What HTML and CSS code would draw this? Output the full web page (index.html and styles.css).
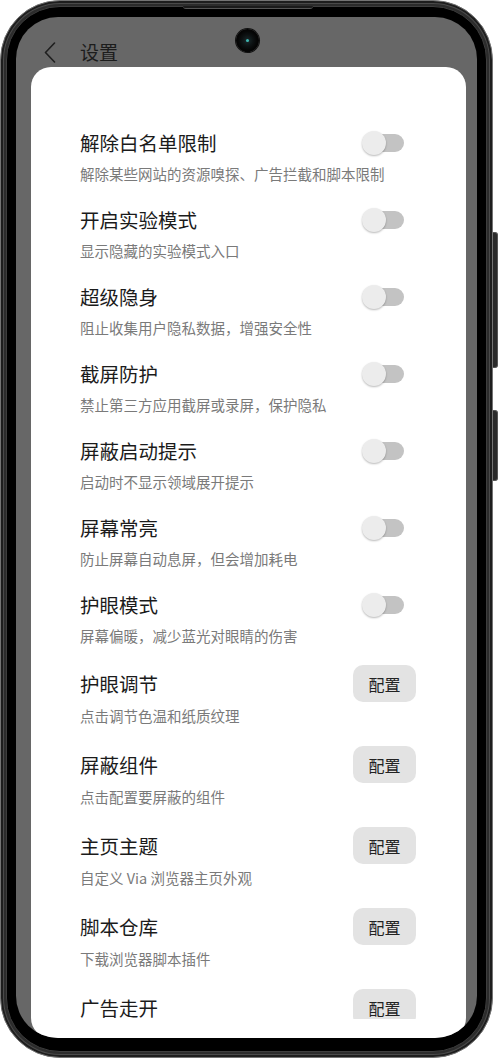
FILE: index.html
```html
<!DOCTYPE html>
<html lang="zh-CN">
<head>
<meta charset="utf-8">
<title>设置</title>
<link rel="stylesheet" href="styles.css">
</head>
<body>
<div class="phone">
  <div class="speaker"></div>
  <div class="side-btn side-vol"></div>
  <div class="side-btn side-power"></div>
  <div class="bezel">
    <div class="screen">
      <div class="camera"><span class="lens"></span></div>
      <header class="topbar">
        <svg class="back" viewBox="0 0 12 21" width="12" height="21"><path d="M10.5 1 L1.5 10.5 L10.5 20"/></svg>
        <h1 class="title">设置</h1>
      </header>
      <main class="card">
        <div class="list">
          <div class="item item-toggle">
            <div class="row"><span class="name">解除白名单限制</span><span class="switch"></span></div>
            <div class="sub">解除某些网站的资源嗅探、广告拦截和脚本限制</div>
          </div>
          <div class="item item-toggle">
            <div class="row"><span class="name">开启实验模式</span><span class="switch"></span></div>
            <div class="sub">显示隐藏的实验模式入口</div>
          </div>
          <div class="item item-toggle">
            <div class="row"><span class="name">超级隐身</span><span class="switch"></span></div>
            <div class="sub">阻止收集用户隐私数据，增强安全性</div>
          </div>
          <div class="item item-toggle">
            <div class="row"><span class="name">截屏防护</span><span class="switch"></span></div>
            <div class="sub">禁止第三方应用截屏或录屏，保护隐私</div>
          </div>
          <div class="item item-toggle">
            <div class="row"><span class="name">屏蔽启动提示</span><span class="switch"></span></div>
            <div class="sub">启动时不显示领域展开提示</div>
          </div>
          <div class="item item-toggle">
            <div class="row"><span class="name">屏幕常亮</span><span class="switch"></span></div>
            <div class="sub">防止屏幕自动息屏，但会增加耗电</div>
          </div>
          <div class="item item-toggle">
            <div class="row"><span class="name">护眼模式</span><span class="switch"></span></div>
            <div class="sub">屏幕偏暖，减少蓝光对眼睛的伤害</div>
          </div>
          <div class="item item-config">
            <div class="row"><span class="name">护眼调节</span><span class="cfg">配置</span></div>
            <div class="sub">点击调节色温和纸质纹理</div>
          </div>
          <div class="item item-config">
            <div class="row"><span class="name">屏蔽组件</span><span class="cfg">配置</span></div>
            <div class="sub">点击配置要屏蔽的组件</div>
          </div>
          <div class="item item-config">
            <div class="row"><span class="name">主页主题</span><span class="cfg">配置</span></div>
            <div class="sub">自定义 Via 浏览器主页外观</div>
          </div>
          <div class="item item-config">
            <div class="row"><span class="name">脚本仓库</span><span class="cfg">配置</span></div>
            <div class="sub">下载浏览器脚本插件</div>
          </div>
          <div class="item item-config">
            <div class="row"><span class="name">广告走开</span><span class="cfg">配置</span></div>
          </div>
        </div>
      </main>
    </div>
  </div>
</div>
</body>
</html>
```

FILE: styles.css
```css
* { box-sizing: border-box; }

html, body {
  margin: 0;
  padding: 0;
  background: #ffffff;
}

body {
  font-family: "Noto Sans CJK SC", "Noto Sans", sans-serif;
  width: 500px;
  height: 1061px;
  overflow: hidden;
}

.phone {
  position: relative;
  width: 493px;
  height: 1058px;
  border: 1px solid #747474;
  border-radius: 60px;
  background: #2c2c2c;
  padding: 5px;
  box-shadow: inset 0 0 0 2px #1e1e1e, inset 0 0 0 3px #4a4a4a;
}

.speaker {
  position: absolute;
  left: 182px;
  top: 5px;
  width: 130px;
  height: 3px;
  background: #1b1b1b;
  border-bottom: 1px solid #555;
  border-radius: 0 0 4px 4px;
}

.side-btn {
  position: absolute;
  right: -6px;
  width: 5px;
  background: #2a2a2a;
  border: 1px solid #555;
  border-left: none;
  border-radius: 0 3px 3px 0;
}

.side-vol { top: 231px; height: 136px; }
.side-power { top: 409px; height: 71px; }

.bezel {
  height: 100%;
  background: #000;
  border: 1px solid #3e3e3e;
  border-radius: 54px;
  padding: 10px 9px 13px 9px;
}

.screen {
  position: relative;
  height: 100%;
  background: #676767;
  border-radius: 42px;
  overflow: hidden;
  display: flex;
  flex-direction: column;
}

.camera {
  position: absolute;
  left: 220px;
  top: 12px;
  width: 23px;
  height: 23px;
  border-radius: 50%;
  background: radial-gradient(circle at 50% 50%, #1a2a2c 0, #0d1112 35%, #050505 60%);
  box-shadow: 0 0 0 1px #111;
}

.lens {
  position: absolute;
  left: 10px;
  top: 10px;
  width: 3px;
  height: 3px;
  border-radius: 50%;
  background: #3fb6b0;
}

.topbar {
  height: 50px;
  flex: none;
  padding: 20px 0 0 28px;
  display: flex;
  align-items: center;
}

.back {
  display: block;
  fill: none;
  stroke: #1f1f1f;
  stroke-width: 1.6;
  stroke-linecap: round;
  stroke-linejoin: round;
}

.title {
  margin: 0 0 0 24px;
  font-size: 19px;
  line-height: 24px;
  font-weight: 400;
  color: #1c1c1c;
}

.card {
  flex: 1;
  min-height: 0;
  margin: 0 11px 0 15px;
  background: #ffffff;
  border-radius: 20px;
  padding-bottom: 19px;
  display: flex;
  flex-direction: column;
}

.list {
  flex: 1;
  min-height: 0;
  overflow: hidden;
  padding: 62px 50px 0 49px;
}

.row {
  display: flex;
  align-items: center;
  justify-content: space-between;
}

.name {
  font-size: 19.5px;
  line-height: 28px;
  color: #1b1b1b;
}

.sub {
  font-size: 14.5px;
  line-height: 20px;
  color: #7a7a7a;
  white-space: nowrap;
}

.item-toggle { padding-bottom: 22px; }
.item-toggle .row { height: 28px; }
.item-toggle .sub { margin-top: 7px; }

.item-config { padding-bottom: 20px; }
.item-config .row { height: 37px; }
.item-config .sub { margin-top: 4px; }

.item-toggle + .item-config { margin-top: -3px; }

.switch {
  position: relative;
  width: 42px;
  height: 24px;
  margin-right: 12px;
  flex: none;
}

.switch::before {
  content: "";
  position: absolute;
  left: 1px;
  top: 3px;
  width: 41px;
  height: 18px;
  border-radius: 9px;
  background: #c3c3c3;
}

.switch::after {
  content: "";
  position: absolute;
  left: 0;
  top: 0;
  width: 24px;
  height: 24px;
  border-radius: 50%;
  background: #ececec;
  box-shadow: 0 1px 2px rgba(0, 0, 0, 0.28);
}

.cfg {
  flex: none;
  width: 63px;
  height: 37px;
  border-radius: 10px;
  background: #e3e3e3;
  color: #222;
  font-size: 16px;
  display: flex;
  align-items: center;
  justify-content: center;
}
```
